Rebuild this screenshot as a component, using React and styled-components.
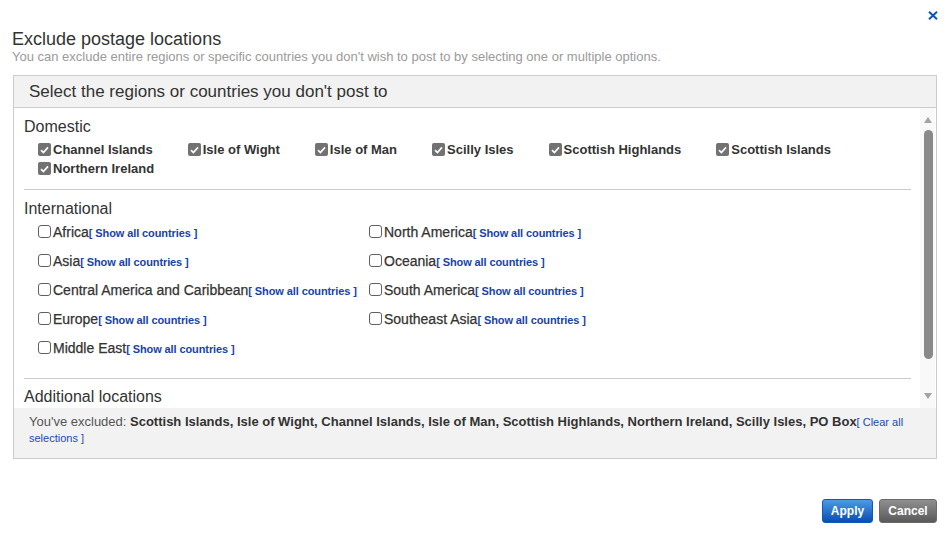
import React from "react";
import styled, { createGlobalStyle, css } from "styled-components";

const GlobalStyle = createGlobalStyle`
  html, body { margin: 0; padding: 0; background: #fff; }
  body { font-family: "Liberation Sans", Arial, sans-serif; color: #333; }
  * { box-sizing: border-box; }
`;

const Page = styled.div`
  width: 947px;
  height: 541px;
  padding: 0 10px 0 12px;
  display: flex;
  flex-direction: column;
`;

const TopBar = styled.div`
  height: 28px;
  display: flex;
  justify-content: flex-end;
  align-items: flex-start;
  padding-top: 11px;
  margin-right: -1px;
`;

const CloseButton = styled.button`
  border: 0;
  background: none;
  padding: 0;
  width: 10px;
  height: 9px;
  cursor: pointer;
  display: block;
  svg { display: block; }
`;

const Title = styled.h1`
  margin: 0;
  font-size: 18px;
  line-height: 22px;
  font-weight: normal;
  color: #333;
`;

const Subtitle = styled.p`
  margin: 0;
  font-size: 13px;
  line-height: 14px;
  color: #9a9a9a;
`;

const Panel = styled.section`
  margin: 11px 0 0 1px;
  border: 1px solid #ccc;
  display: flex;
  flex-direction: column;
`;

const PanelHeader = styled.div`
  height: 32px;
  line-height: 31px;
  background: #f2f2f2;
  border-bottom: 1px solid #ccc;
  padding-left: 15px;
  font-size: 17px;
  color: #333;
`;

const ScrollArea = styled.div`
  height: 300px;
  display: flex;
  background: #fff;
`;

const ScrollContent = styled.div`
  flex: 1;
  overflow: hidden;
  padding: 10px 9px 0 10px;
`;

const Scrollbar = styled.div`
  width: 15px;
  margin-right: 1px;
  background: #f9f9f9;
  display: flex;
  flex-direction: column;
  align-items: center;
  padding: 9px 0 9px 1px;
`;

const Arrow = styled.span`
  width: 0;
  height: 0;
  border-left: 4.5px solid transparent;
  border-right: 4.5px solid transparent;
  ${(p) =>
    p.$down
      ? css`border-top: 6px solid #a3a3a3; margin-top: auto;`
      : css`border-bottom: 6px solid #a3a3a3;`}
`;

const Thumb = styled.span`
  width: 9px;
  height: 229px;
  margin-top: 7px;
  border-radius: 5px;
  background: #898989;
`;

const SectionTitle = styled.h2`
  margin: 0;
  font-size: 16px;
  line-height: 18px;
  font-weight: normal;
  color: #333;
`;

const Divider = styled.hr`
  border: 0;
  border-top: 1px solid #ccc;
  margin: ${(p) => p.$top}px 0 ${(p) => p.$bottom}px;
`;

const DomesticList = styled.div`
  display: flex;
  flex-wrap: wrap;
  column-gap: 35px;
  padding-left: 14px;
  margin-top: 4px;
`;

const DomesticItem = styled.label`
  display: inline-flex;
  align-items: center;
  gap: 2px;
  font-size: 13px;
  line-height: 19px;
  font-weight: bold;
  color: #333;
`;

const Box = styled.span`
  width: 13px;
  height: 13px;
  flex-shrink: 0;
  display: inline-flex;
  align-items: center;
  justify-content: center;
  ${(p) =>
    p.$checked
      ? css`
          background: #727272;
          border-radius: 2px;
        `
      : css`
          background: #fff;
          border: 1px solid #606060;
          border-radius: 3px;
        `}
  svg { display: block; }
`;

const IntlGrid = styled.div`
  display: grid;
  grid-template-columns: 331px 1fr;
  grid-auto-flow: column;
  grid-template-rows: repeat(5, 29px);
  padding-left: 14px;
  margin-top: -1px;
`;

const IntlItem = styled.label`
  display: flex;
  align-items: center;
  gap: 2px;
  height: 29px;
`;

const IntlName = styled.span`
  font-size: 14px;
  line-height: 16px;
  color: #333;
  -webkit-text-stroke: 0.25px #333;
`;

const ShowLink = styled.a`
  font-size: 11px;
  font-weight: bold;
  letter-spacing: -0.1px;
  color: #1843a8;
  text-decoration: none;
`;

const Summary = styled.div`
  height: 50px;
  background: #f2f2f2;
  padding: 6px 15px 0 15px;
  font-size: 13px;
  line-height: 16px;
  color: #555;
`;

const SummaryLabel = styled.span`
  color: #555;
`;

const Excluded = styled.strong`
  color: #333;
  font-weight: bold;
`;

const ClearLink = styled.a`
  font-size: 11px;
  color: #1a49b5;
  text-decoration: none;
`;

const Actions = styled.div`
  margin-top: 40px;
  display: flex;
  justify-content: flex-end;
  gap: 6px;
`;

const Button = styled.button`
  height: 24px;
  padding: 0;
  border-radius: 3px;
  font-family: "Liberation Sans", Arial, sans-serif;
  font-size: 12px;
  font-weight: bold;
  color: #fff;
  cursor: pointer;
  ${(p) =>
    p.$primary
      ? css`
          width: 51px;
          border: 1px solid #1258b8;
          background: linear-gradient(#4a9ce2, #0a4db4);
        `
      : css`
          width: 58px;
          border: 1px solid #6a6a6a;
          background: linear-gradient(#8f8f8f, #5a5a5a);
        `}
`;

const Check = () => (
  <svg width="9" height="8" viewBox="0 0 9 8">
    <path d="M1 4.2 L3.4 6.5 L8 1.4" fill="none" stroke="#fff" strokeWidth="1.7" />
  </svg>
);

const CheckBox = ({ checked }) => <Box $checked={checked}>{checked && <Check />}</Box>;

const domestic = [
  "Channel Islands",
  "Isle of Wight",
  "Isle of Man",
  "Scilly Isles",
  "Scottish Highlands",
  "Scottish Islands",
  "Northern Ireland",
];

const international = [
  "Africa",
  "Asia",
  "Central America and Caribbean",
  "Europe",
  "Middle East",
  "North America",
  "Oceania",
  "South America",
  "Southeast Asia",
];

export default function App() {
  return (
    <>
      <GlobalStyle />
      <Page>
        <TopBar>
          <CloseButton aria-label="Close">
            <svg width="10" height="9" viewBox="0 0 10 9">
              <path d="M1 0.8 L9 8.2 M9 0.8 L1 8.2" stroke="#0b55b8" strokeWidth="2" />
            </svg>
          </CloseButton>
        </TopBar>
        <Title>Exclude postage locations</Title>
        <Subtitle>
          You can exclude entire regions or specific countries you don't wish to post to by selecting one or multiple options.
        </Subtitle>
        <Panel>
          <PanelHeader>Select the regions or countries you don't post to</PanelHeader>
          <ScrollArea>
            <ScrollContent>
              <SectionTitle>Domestic</SectionTitle>
              <DomesticList>
                {domestic.map((d) => (
                  <DomesticItem key={d}>
                    <CheckBox checked />
                    {d}
                  </DomesticItem>
                ))}
              </DomesticList>
              <Divider $top={11} $bottom={10} />
              <SectionTitle>International</SectionTitle>
              <IntlGrid>
                {international.map((r) => (
                  <IntlItem key={r}>
                    <CheckBox />
                    <span>
                      <IntlName>{r}</IntlName>
                      <ShowLink href="#">[ Show all countries ]</ShowLink>
                    </span>
                  </IntlItem>
                ))}
              </IntlGrid>
              <Divider $top={16} $bottom={9} />
              <SectionTitle>Additional locations</SectionTitle>
            </ScrollContent>
            <Scrollbar>
              <Arrow />
              <Thumb />
              <Arrow $down />
            </Scrollbar>
          </ScrollArea>
          <Summary>
            <SummaryLabel>You've excluded: </SummaryLabel>
            <Excluded>
              Scottish Islands, Isle of Wight, Channel Islands, Isle of Man, Scottish Highlands, Northern Ireland, Scilly Isles, PO Box
            </Excluded>
            <ClearLink href="#">[ Clear all selections ]</ClearLink>
          </Summary>
        </Panel>
        <Actions>
          <Button $primary>Apply</Button>
          <Button>Cancel</Button>
        </Actions>
      </Page>
    </>
  );
}
